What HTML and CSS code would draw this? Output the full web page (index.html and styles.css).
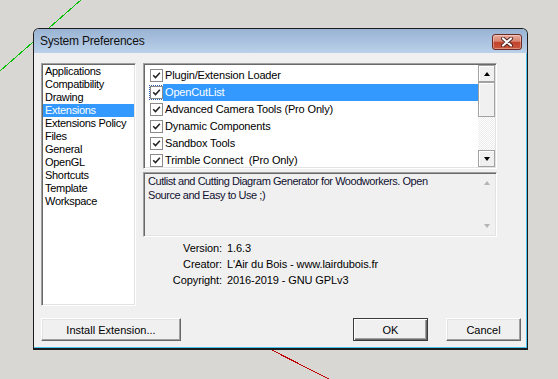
FILE: index.html
```html
<!DOCTYPE html>
<html lang="en">

<head>
  <meta charset="utf-8" />
  <title>System Preferences</title>
  <link rel="stylesheet" href="styles.css">
</head>

<body>
  <div class="desktop">
    <svg class="axes" width="558" height="379" viewBox="0 0 558 379">
      <line x1="82" y1="-1" x2="0" y2="71" stroke="#00c000" stroke-width="1" />
      <line x1="250" y1="339" x2="331" y2="380" stroke="#c00000" stroke-width="1" />
    </svg>

    <div class="window">
      <div class="titlebar">
        <span class="title">System Preferences</span>
        <button class="close">
          <svg width="14" height="10" viewBox="0 0 14 10">
            <path d="M3 1.5 L11 8.5 M11 1.5 L3 8.5" stroke="#4a2323" stroke-width="4" stroke-linecap="round" />
            <path d="M3 1.5 L11 8.5 M11 1.5 L3 8.5" stroke="#fff" stroke-width="2.2" stroke-linecap="round" />
          </svg>
        </button>
      </div>

      <div class="client">
        <div class="panes">
          <ul class="catlist">
            <li>Applications</li>
            <li>Compatibility</li>
            <li>Drawing</li>
            <li class="selected">Extensions</li>
            <li>Extensions Policy</li>
            <li>Files</li>
            <li>General</li>
            <li>OpenGL</li>
            <li>Shortcuts</li>
            <li>Template</li>
            <li>Workspace</li>
          </ul>

          <div class="detail">
            <div class="extlist">
              <ul class="rows">
                <li><span class="check"></span><span class="name">Plugin/Extension Loader</span></li>
                <li class="selected"><span class="check focus"></span><span class="name">OpenCutList</span></li>
                <li><span class="check"></span><span class="name">Advanced Camera Tools (Pro Only)</span></li>
                <li><span class="check"></span><span class="name">Dynamic Components</span></li>
                <li><span class="check"></span><span class="name">Sandbox Tools</span></li>
                <li><span class="check"></span><span class="name">Trimble Connect&nbsp; (Pro Only)</span></li>
              </ul>
              <div class="vscroll">
                <div class="sbtn"><span class="arrow up"></span></div>
                <div class="thumb"></div>
                <div class="track"></div>
                <div class="sbtn"><span class="arrow down"></span></div>
              </div>
            </div>

            <div class="desc">
              <p class="desc-text">Cutlist and Cutting Diagram Generator for Woodworkers. Open<br>Source and Easy to Use ;)</p>
              <div class="desc-scroll">
                <span class="arrow up faded"></span>
                <span class="arrow down faded"></span>
              </div>
            </div>

            <dl class="info">
              <dt>Version:</dt>
              <dd>1.6.3</dd>
              <dt>Creator:</dt>
              <dd>L'Air du Bois - www.lairdubois.fr</dd>
              <dt>Copyright:</dt>
              <dd>2016-2019 - GNU GPLv3</dd>
            </dl>
          </div>
        </div>

        <div class="actions">
          <button class="btn install">Install Extension...</button>
          <button class="btn default ok">OK</button>
          <button class="btn cancel">Cancel</button>
        </div>
      </div>
    </div>
  </div>
</body>

</html>
```

FILE: styles.css
```css
/*
  colours:
    canvas      #d8d7d3
    dialog      #f0f0f0
    selection   #3399ff
 */
body {
  margin: 0;
  background-color: #d8d7d3;
  font-family: "Liberation Sans", Arial, sans-serif;
  font-size: 11px;
  color: #000;
  overflow: hidden;
}

.desktop {
  position: relative;
  width: 558px;
  height: 379px;
}

.axes {
  position: absolute;
  left: 0;
  top: 0;
  shape-rendering: crispEdges;
}

/* the dialog window sits on the sketchup canvas */
.window {
  position: absolute;
  left: 33px;
  top: 28px;
  width: 495px;
  height: 322px;
  box-sizing: border-box;
  border: 1px solid #1c1c1c;
  border-bottom-width: 2px;
  border-radius: 6px 6px 0 0;
  background-color: #f0f0f0;
  box-shadow: inset -1px -1px 0 #4cc3ef;
  display: flex;
  flex-direction: column;
}

.titlebar {
  height: 24px;
  flex: none;
  display: flex;
  align-items: center;
  padding: 0 5px 0 6px;
  border-radius: 5px 5px 0 0;
  background: linear-gradient(#99b3d3, #bbd1ea);
}

.title {
  flex: 1;
  font-size: 12px;
  letter-spacing: -0.2px;
  color: #111;
}

.close {
  width: 30px;
  height: 16px;
  margin-top: 1px;
  padding: 0;
  border: 1px solid #6e2a22;
  border-radius: 3px;
  background: linear-gradient(#e9aa9a 0%, #d98571 45%, #c3422b 52%, #c9573e 100%);
  box-shadow: inset 0 0 0 1px rgba(255, 255, 255, 0.35);
  display: flex;
  align-items: center;
  justify-content: center;
}

.client {
  flex: 1;
  padding: 10px 6px 0 7px;
}

.panes {
  display: flex;
  gap: 7px;
}

/* sunken 3d frame used by the lists and the text box */
.catlist,
.extlist,
.desc {
  box-sizing: border-box;
  border: 1px solid;
  border-color: #a0a0a0 #fff #fff #a0a0a0;
  box-shadow: inset 1px 1px 0 #696969, inset -1px -1px 0 #e3e3e3;
  padding: 1px;
}

.catlist {
  width: 95px;
  height: 243px;
  margin: 0;
  list-style: none;
  background-color: #fff;
}

.catlist li {
  height: 13px;
  line-height: 13px;
  padding-left: 2px;
  letter-spacing: -0.3px;
  white-space: nowrap;
}

.catlist li.selected,
.rows li.selected .name {
  background-color: #3399ff;
  color: #fff;
}

.detail {
  width: 354px;
  display: flex;
  flex-direction: column;
}

.extlist {
  height: 106px;
  display: flex;
  background-color: #fff;
}

.rows {
  flex: 1;
  margin: 0;
  padding: 2px 0 0 0;
  list-style: none;
  overflow: hidden;
}

.rows li {
  height: 17px;
  display: flex;
  align-items: center;
}

.check {
  width: 13px;
  height: 13px;
  box-sizing: border-box;
  margin-left: 5px;
  border: 1px solid #8a8a8a;
  background: #fff url("data:image/svg+xml,%3Csvg xmlns='http://www.w3.org/2000/svg' width='11' height='11'%3E%3Cpath d='M2.2 5.2 L4.5 7.6 L8.9 2.8' fill='none' stroke='%23222' stroke-width='1.5'/%3E%3C/svg%3E") center / 11px 11px no-repeat;
}

.check.focus {
  outline: 1px dotted #2b5fb0;
  outline-offset: 0;
}

.name {
  flex: 1;
  height: 17px;
  line-height: 17px;
  padding-left: 2px;
  letter-spacing: -0.15px;
  white-space: nowrap;
}

.vscroll {
  width: 17px;
  display: flex;
  flex-direction: column;
}

.sbtn,
.thumb {
  box-sizing: border-box;
  border: 1px solid #a2a2a2;
  box-shadow: inset 1px 1px 0 #fff;
  background-color: #f0f0f0;
}

.sbtn {
  height: 17px;
  display: flex;
  align-items: center;
  justify-content: center;
}

.thumb {
  height: 35px;
}

.track {
  flex: 1;
  background: repeating-conic-gradient(#fff 0 25%, #ececec 0 50%) 0 0 / 2px 2px;
}

.arrow {
  width: 0;
  height: 0;
  border-left: 3.5px solid transparent;
  border-right: 3.5px solid transparent;
}

.arrow.up {
  border-bottom: 4px solid #000;
}

.arrow.down {
  border-top: 4px solid #000;
}

.arrow.up.faded {
  border-bottom-color: #b4b4b4;
}

.arrow.down.faded {
  border-top-color: #b4b4b4;
}

.desc {
  height: 65px;
  margin-top: 3px;
  display: flex;
  background-color: #f0f0f0;
}

.desc-text {
  flex: 1;
  margin: 0;
  padding-left: 3px;
  line-height: 14px;
  letter-spacing: -0.45px;
  color: #101030;
}

.desc-scroll {
  width: 17px;
  display: flex;
  flex-direction: column;
  align-items: center;
  justify-content: space-between;
  padding: 7px 0 7px 0;
}

.info {
  margin: 3px 0 0 0;
  display: grid;
  grid-template-columns: 79px auto;
  column-gap: 5px;
  line-height: 16px;
  letter-spacing: -0.1px;
}

.info dt {
  text-align: right;
}

.info dd {
  margin: 0;
}

.actions {
  margin-top: 12px;
  display: flex;
  gap: 18px;
}

.btn {
  height: 23px;
  width: 75px;
  padding: 0;
  box-sizing: border-box;
  font-family: "Liberation Sans", Arial, sans-serif;
  font-size: 11px;
  color: #000;
  background-color: #f0f0f0;
  border: 1px solid;
  border-color: #fff #696969 #696969 #fff;
  box-shadow: inset -1px -1px 0 #a0a0a0, inset 1px 1px 0 #e3e3e3;
}

.btn.install {
  width: 140px;
}

.btn.ok {
  margin-left: auto;
}

.btn.default {
  border-color: #3c3c3c;
  box-shadow: inset 1px 1px 0 #fff, inset -1px -1px 0 #696969, inset -2px -2px 0 #a0a0a0;
}
```
